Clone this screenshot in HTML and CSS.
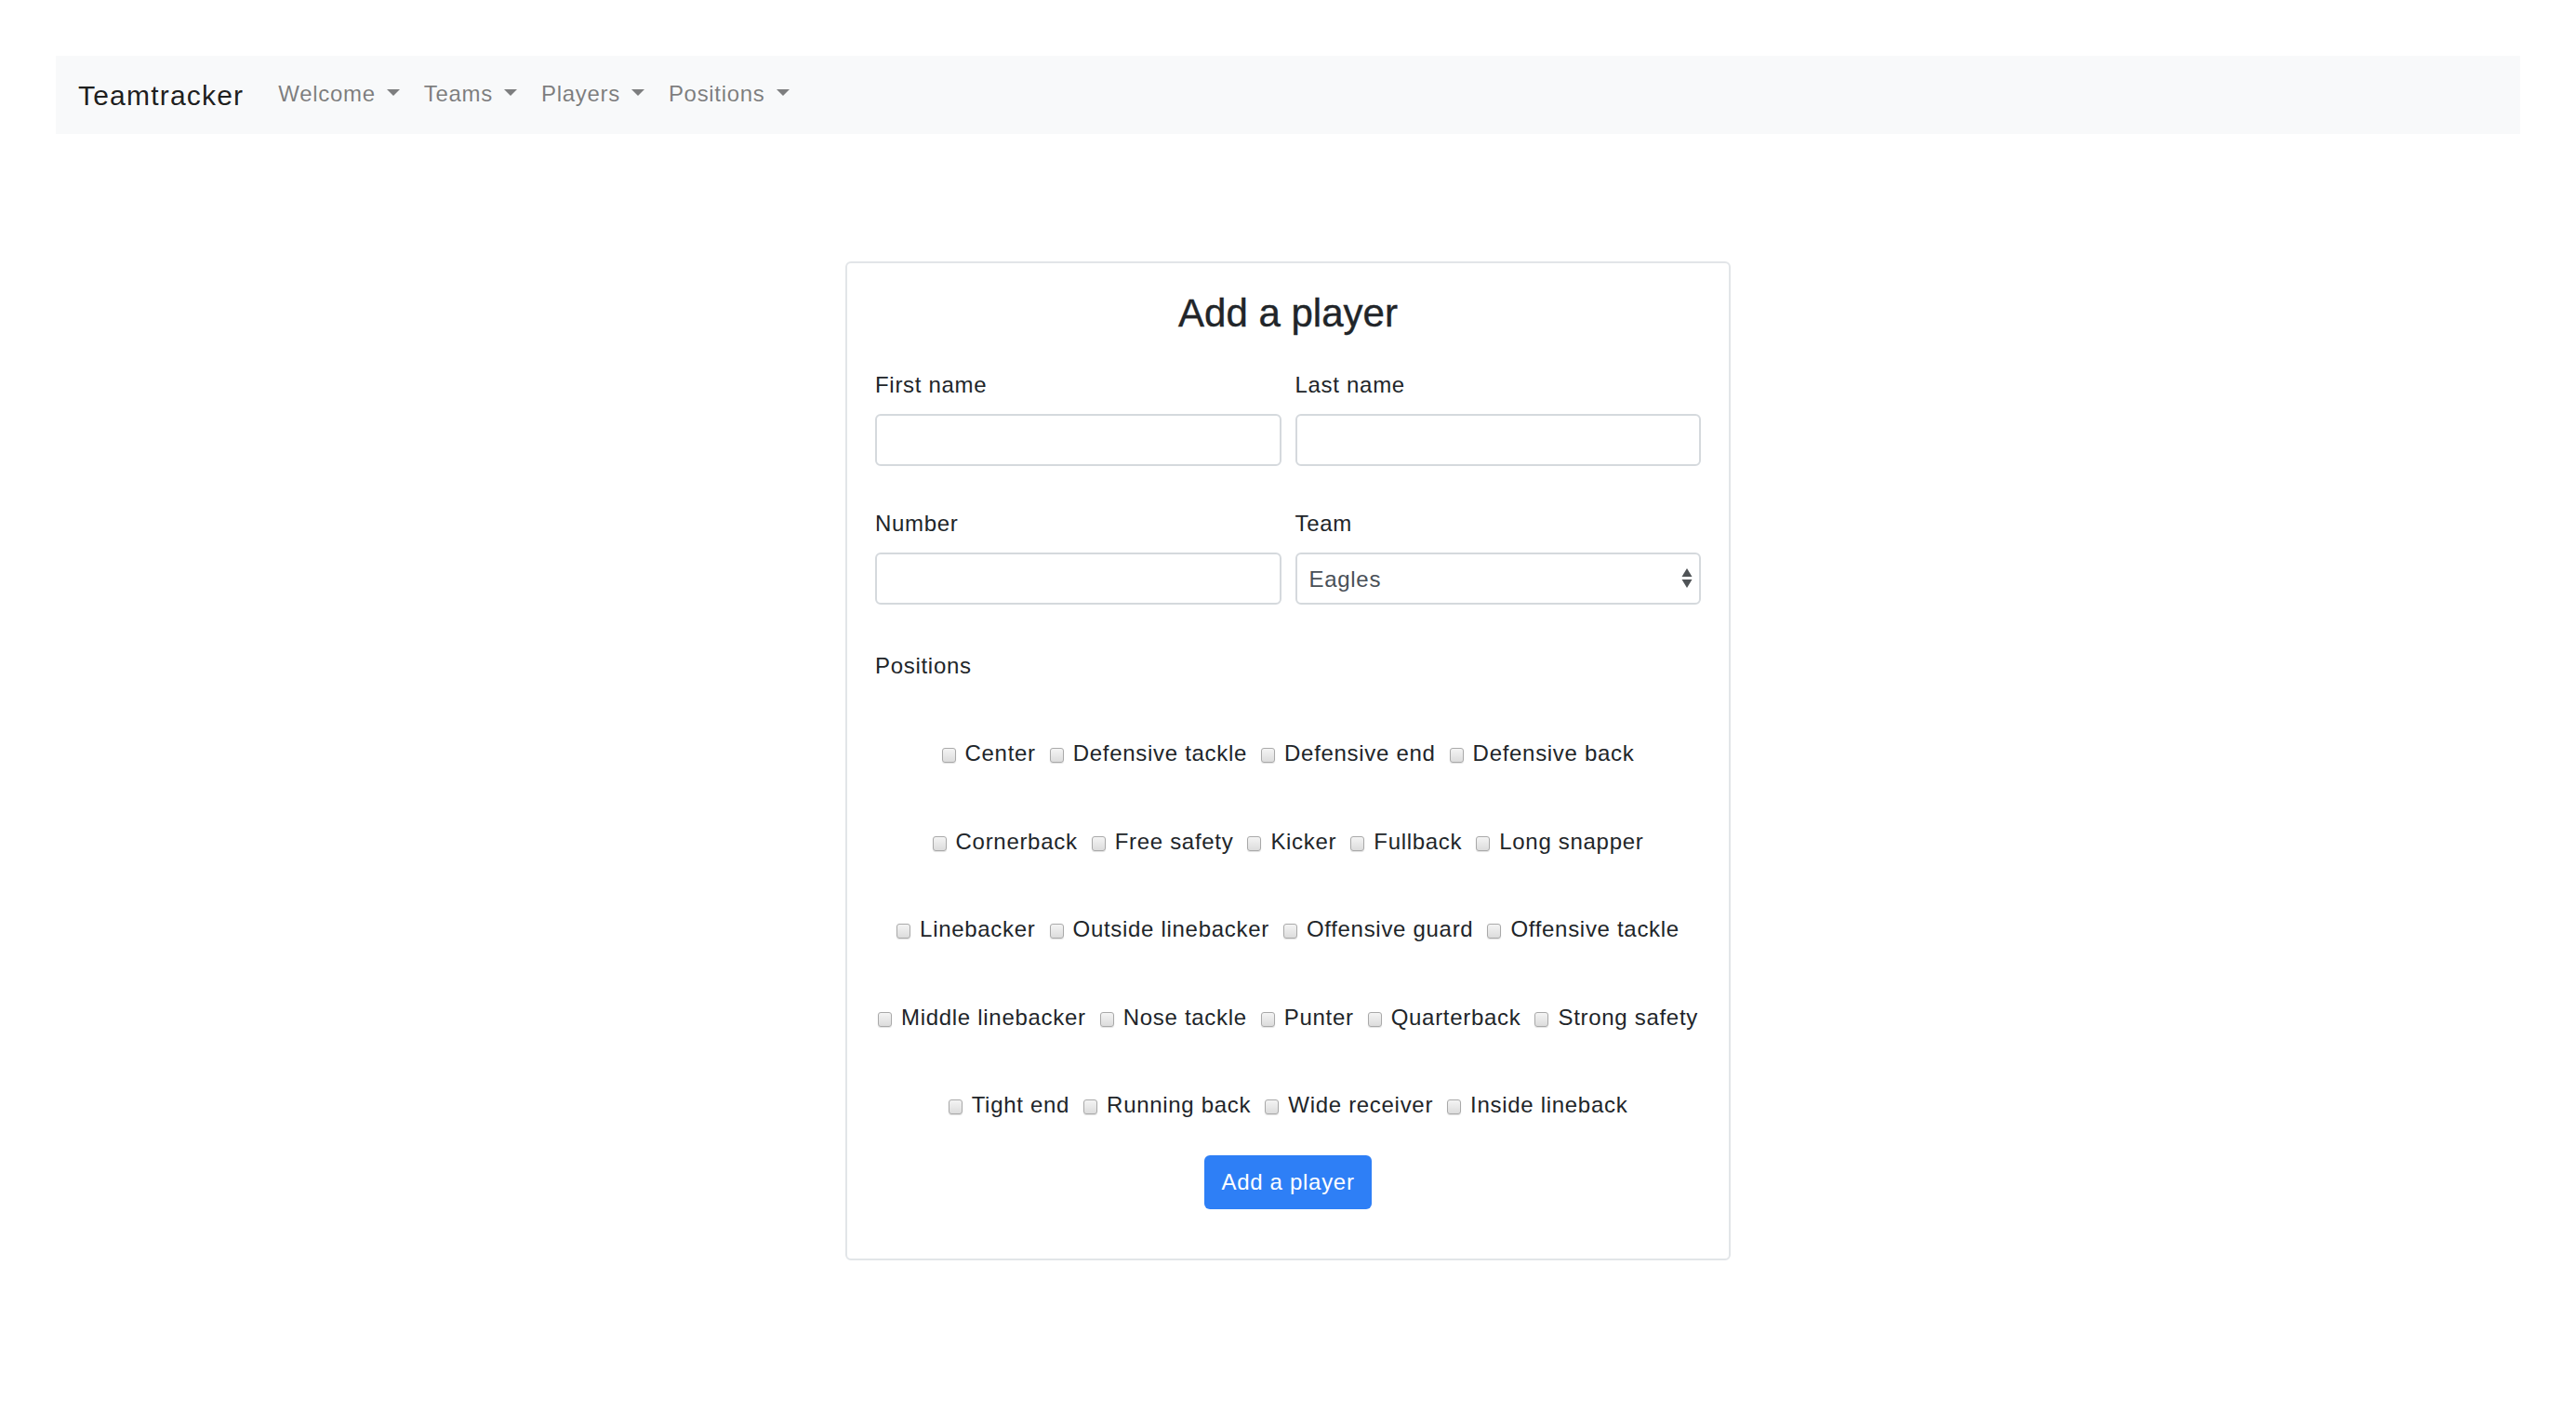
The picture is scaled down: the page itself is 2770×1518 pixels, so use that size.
FILE: index.html
```html
<!DOCTYPE html>
<html lang="en">
<head>
<meta charset="utf-8">
<title>Teamtracker - Add a player</title>
<link rel="stylesheet" href="styles.css">
</head>
<body>
<div class="page">
  <nav class="navbar">
    <a class="brand" href="#">Teamtracker</a>
    <ul class="nav">
      <li class="nav-item"><a class="nav-link" href="#">Welcome<span class="caret"></span></a></li>
      <li class="nav-item"><a class="nav-link" href="#">Teams<span class="caret"></span></a></li>
      <li class="nav-item"><a class="nav-link" href="#">Players<span class="caret"></span></a></li>
      <li class="nav-item"><a class="nav-link" href="#">Positions<span class="caret"></span></a></li>
    </ul>
  </nav>

  <main class="main">
    <form class="card">
      <h3 class="title">Add a player</h3>

      <div class="form-row">
        <div class="col">
          <label class="label" for="first">First name</label>
          <input class="input" id="first" type="text">
        </div>
        <div class="col">
          <label class="label" for="last">Last name</label>
          <input class="input" id="last" type="text">
        </div>
      </div>

      <div class="form-row">
        <div class="col">
          <label class="label" for="number">Number</label>
          <input class="input" id="number" type="text">
        </div>
        <div class="col">
          <label class="label" for="team">Team</label>
          <div class="select-wrap">
            <select class="input select" id="team">
              <option>Eagles</option>
            </select>
            <svg class="select-arrows" width="12" height="22" viewBox="0 0 12 22"><path d="M6 0 L11.5 9 L0.5 9 Z" fill="#4f5356"/><path d="M0.5 12 L11.5 12 L6 21 Z" fill="#4f5356"/></svg>
          </div>
        </div>
      </div>

      <div class="label positions-label">Positions</div>

      <div class="checks">
        <div class="check-row">
          <label class="check"><input type="checkbox"><span>Center</span></label>
          <label class="check"><input type="checkbox"><span>Defensive tackle</span></label>
          <label class="check"><input type="checkbox"><span>Defensive end</span></label>
          <label class="check"><input type="checkbox"><span>Defensive back</span></label>
        </div>
        <div class="check-row">
          <label class="check"><input type="checkbox"><span>Cornerback</span></label>
          <label class="check"><input type="checkbox"><span>Free safety</span></label>
          <label class="check"><input type="checkbox"><span>Kicker</span></label>
          <label class="check"><input type="checkbox"><span>Fullback</span></label>
          <label class="check"><input type="checkbox"><span>Long snapper</span></label>
        </div>
        <div class="check-row">
          <label class="check"><input type="checkbox"><span>Linebacker</span></label>
          <label class="check"><input type="checkbox"><span>Outside linebacker</span></label>
          <label class="check"><input type="checkbox"><span>Offensive guard</span></label>
          <label class="check"><input type="checkbox"><span>Offensive tackle</span></label>
        </div>
        <div class="check-row">
          <label class="check"><input type="checkbox"><span>Middle linebacker</span></label>
          <label class="check"><input type="checkbox"><span>Nose tackle</span></label>
          <label class="check"><input type="checkbox"><span>Punter</span></label>
          <label class="check"><input type="checkbox"><span>Quarterback</span></label>
          <label class="check"><input type="checkbox"><span>Strong safety</span></label>
        </div>
        <div class="check-row">
          <label class="check"><input type="checkbox"><span>Tight end</span></label>
          <label class="check"><input type="checkbox"><span>Running back</span></label>
          <label class="check"><input type="checkbox"><span>Wide receiver</span></label>
          <label class="check"><input type="checkbox"><span>Inside lineback</span></label>
        </div>
      </div>

      <div class="actions">
        <button class="btn" type="button">Add a player</button>
      </div>
    </form>
  </main>
</div>
</body>
</html>
```

FILE: styles.css
```css
* {
  box-sizing: border-box;
}

html, body {
  margin: 0;
  padding: 0;
  background: #ffffff;
}

body {
  font-family: "Liberation Sans", Arial, "Helvetica Neue", sans-serif;
  font-size: 24px;
  line-height: 36px;
  letter-spacing: 0.7px;
  color: #212529;
}

.page {
  padding: 60px 60px 0 60px;
}

/* Navbar */
.navbar {
  height: 84px;
  background: #f8f9fa;
  display: flex;
  align-items: center;
  padding: 0 24px;
}

.brand {
  font-size: 30px;
  letter-spacing: 1.2px;
  line-height: 45px;
  color: rgba(0, 0, 0, 0.9);
  text-decoration: none;
  margin-right: 24px;
  margin-top: 1px;
}

.nav {
  display: flex;
  list-style: none;
  margin: 0;
  padding: 0;
}

.nav-link {
  display: flex;
  align-items: center;
  padding: 0 13px;
  color: rgba(0, 0, 0, 0.5);
  text-decoration: none;
  line-height: 36px;
  margin-top: -2px;
}

.caret {
  display: inline-block;
  width: 0;
  height: 0;
  margin-left: 12px;
  margin-top: -4px;
  border-top: 7px solid #7d7e7f;
  border-left: 7px solid transparent;
  border-right: 7px solid transparent;
}

/* Card */
.main {
  display: flex;
  justify-content: center;
  margin-top: 137px;
  padding-bottom: 60px;
}

.card {
  width: 952px;
  border: 2px solid #e2e5e8;
  border-radius: 6px;
  padding: 29px 30px 30px 30px;
  margin: 0;
}

.title {
  margin: 0 0 34px 0;
  text-align: center;
  font-size: 42px;
  line-height: 50px;
  font-weight: 500;
  letter-spacing: 0;
  -webkit-text-stroke: 0.4px #212529;
  color: #212529;
}

.form-row {
  display: flex;
  gap: 15px;
  margin-bottom: 44px;
}

.col {
  flex: 1 1 0;
  display: flex;
  flex-direction: column;
}

.label {
  display: block;
  line-height: 36px;
  margin-bottom: 13px;
  color: #212529;
}

.input {
  height: 56px;
  width: 100%;
  border: 2px solid #d5d9dd;
  border-radius: 6px;
  background: #ffffff;
  font-family: inherit;
  font-size: 24px;
  letter-spacing: 0.7px;
  color: #495057;
  padding: 0 12px;
  margin: 0;
  outline: none;
}

.select-wrap {
  position: relative;
}

.select {
  -webkit-appearance: none;
  appearance: none;
  padding-left: 13px;
}

.select-arrows {
  position: absolute;
  right: 9px;
  top: 17px;
  pointer-events: none;
}

.positions-label {
  padding-top: 4px;
  margin-bottom: 58px;
}

/* Checkbox rows */
.checks {
  display: flex;
  flex-direction: column;
  gap: 58.5px;
}

.check-row {
  display: flex;
  justify-content: center;
  align-items: center;
  gap: 15px;
  height: 36px;
}

.check {
  display: flex;
  align-items: center;
  white-space: nowrap;
  color: #212529;
}

.check input {
  -webkit-appearance: none;
  appearance: none;
  width: 15px;
  height: 16px;
  margin: 4px 10px 0 0;
  border: 1px solid #a9a9a9;
  border-radius: 3px;
  background: linear-gradient(#f4f4f4, #dcdcdc);
  box-shadow: 0 1px 1px rgba(0, 0, 0, 0.12);
}

.actions {
  display: flex;
  justify-content: center;
  margin-top: 36px;
  margin-bottom: 23px;
}

.btn {
  height: 58px;
  padding: 0 18px;
  border: none;
  border-radius: 6px;
  background: #2e7ff6;
  color: #ffffff;
  font-family: inherit;
  font-size: 24px;
  letter-spacing: 0.7px;
  line-height: 36px;
}
```
